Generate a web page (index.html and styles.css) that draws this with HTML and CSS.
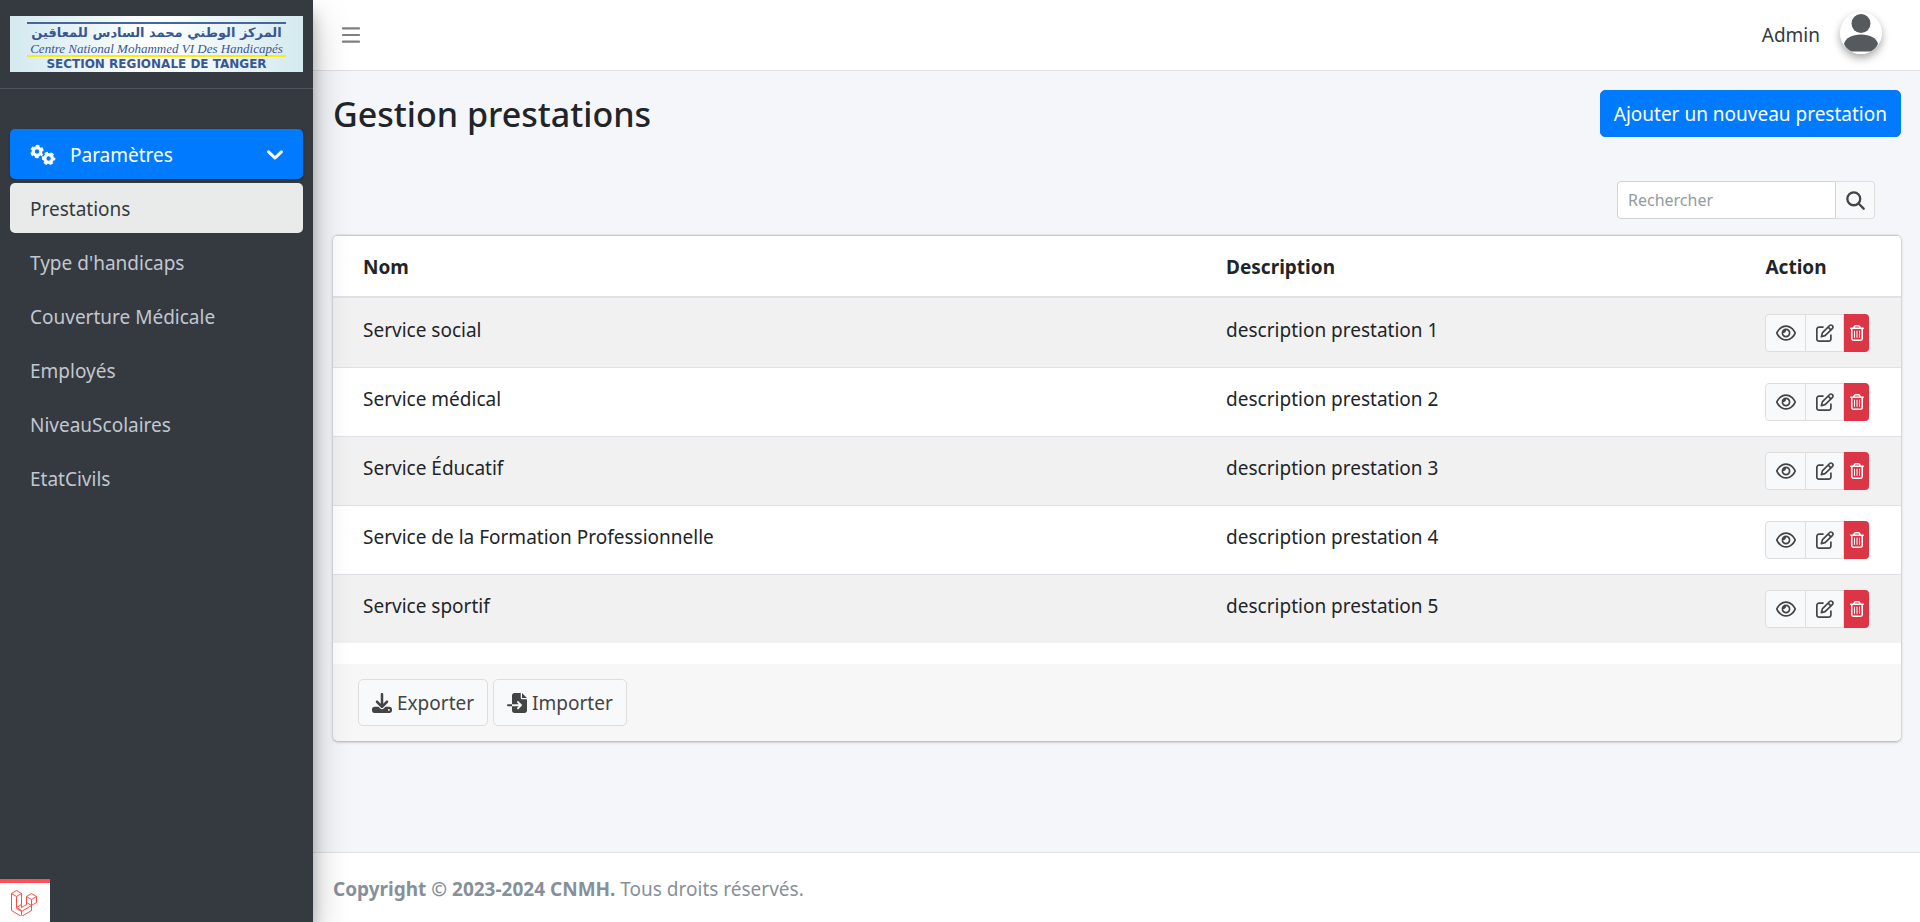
FILE: index.html
```html
<!DOCTYPE html>
<html lang="fr">
<head>
<meta charset="utf-8">
<title>Gestion prestations</title>
<meta name="viewport" content="width=device-width, initial-scale=1">
<link rel="stylesheet" href="styles.css">
</head>
<body>
<svg class="sprite" aria-hidden="true">
  <symbol id="eye" viewBox="0 0 576 512"><path d="M288 80c-65.2 0-118.8 29.6-159.9 67.7C89.6 183.5 63 226 49.4 256c13.6 30 40.2 72.5 78.6 108.3C169.2 402.4 222.8 432 288 432s118.8-29.6 159.9-67.7C486.4 328.5 513 286 526.6 256c-13.6-30-40.2-72.5-78.6-108.3C406.8 109.6 353.2 80 288 80zM95.4 112.6C142.5 68.8 207.2 32 288 32s145.5 36.8 192.6 80.6c46.8 43.5 78.1 95.4 93 131.1c3.3 7.9 3.3 16.7 0 24.6c-14.9 35.7-46.2 87.7-93 131.1C433.5 443.2 368.8 480 288 480s-145.5-36.8-192.6-80.6C48.6 356 17.3 304 2.5 268.3c-3.3-7.9-3.3-16.7 0-24.6C17.3 208 48.6 156 95.4 112.6zM288 336c44.2 0 80-35.8 80-80s-35.8-80-80-80c-.7 0-1.3 0-2 0c1.3 5.1 2 10.5 2 16c0 35.3-28.7 64-64 64c-5.5 0-10.9-.7-16-2c0 .7 0 1.3 0 2c0 44.2 35.8 80 80 80zm0-208a128 128 0 1 1 0 256 128 128 0 1 1 0-256z"/></symbol>
  <symbol id="edit" viewBox="0 0 512 512"><path d="M441 58.9L453.1 71c9.4 9.4 9.4 24.6 0 33.9L424 134.1 377.9 88 407 58.9c9.4-9.4 24.6-9.4 33.9 0zM209.8 256.2L344 121.9 390.1 168 255.8 302.2c-2.9 2.9-6.5 5-10.4 6.1l-58.5 16.7 16.7-58.5c1.1-3.9 3.2-7.5 6.1-10.4zM373.1 25L175.8 222.2c-8.7 8.7-15 19.4-18.3 31.1l-28.6 100c-2.4 8.4-.1 17.4 6.1 23.6s15.2 8.5 23.6 6.1l100-28.6c11.8-3.4 22.5-9.7 31.1-18.3L487 138.9c28.1-28.1 28.1-73.7 0-101.8L474.9 25C446.8-3.1 401.2-3.1 373.1 25zM88 64C39.4 64 0 103.4 0 152V424c0 48.6 39.4 88 88 88H360c48.6 0 88-39.4 88-88V312c0-13.3-10.7-24-24-24s-24 10.7-24 24V424c0 22.1-17.9 40-40 40H88c-22.1 0-40-17.9-40-40V152c0-22.1 17.9-40 40-40H200c13.3 0 24-10.7 24-24s-10.7-24-24-24H88z"/></symbol>
  <symbol id="trash" viewBox="0 0 448 512"><path d="M170.5 51.6L151.5 80h145l-19-28.4c-1.5-2.2-4-3.6-6.7-3.6H177.1c-2.7 0-5.2 1.3-6.7 3.6zm147-26.6L354.2 80H368h48 8c13.3 0 24 10.7 24 24s-10.7 24-24 24h-8V432c0 44.2-35.8 80-80 80H112c-44.2 0-80-35.8-80-80V128H24c-13.3 0-24-10.7-24-24S10.7 80 24 80h8H80 93.8l36.7-55.1C140.9 9.4 158.4 0 177.1 0h93.7c18.7 0 36.2 9.4 46.6 24.9zM80 128V432c0 17.7 14.3 32 32 32H336c17.7 0 32-14.3 32-32V128H80zm80 64V400c0 8.8-7.2 16-16 16s-16-7.2-16-16V192c0-8.8 7.2-16 16-16s16 7.2 16 16zm80 0V400c0 8.8-7.2 16-16 16s-16-7.2-16-16V192c0-8.8 7.2-16 16-16s16 7.2 16 16zm80 0V400c0 8.8-7.2 16-16 16s-16-7.2-16-16V192c0-8.8 7.2-16 16-16s16 7.2 16 16z"/></symbol>
  <symbol id="download" viewBox="0 0 512 512"><path d="M288 32c0-17.7-14.3-32-32-32s-32 14.3-32 32V274.7l-73.4-73.4c-12.5-12.5-32.8-12.5-45.3 0s-12.5 32.8 0 45.3l128 128c12.5 12.5 32.8 12.5 45.3 0l128-128c12.5-12.5 12.5-32.8 0-45.3s-32.8-12.5-45.3 0L288 274.7V32zM64 352c-35.3 0-64 28.7-64 64v32c0 35.3 28.7 64 64 64H448c35.3 0 64-28.7 64-64V416c0-35.3-28.7-64-64-64H346.5l-45.3 45.3c-25 25-65.5 25-90.5 0L165.5 352H64zm368 56a24 24 0 1 1 0 48 24 24 0 1 1 0-48z"/></symbol>
  <symbol id="import" viewBox="0 0 512 512"><path d="M128 64c0-35.3 28.7-64 64-64H352V128c0 17.7 14.3 32 32 32H512V448c0 35.3-28.7 64-64 64H192c-35.3 0-64-28.7-64-64V336H302.1l-39 39c-9.4 9.4-9.4 24.6 0 33.9s24.6 9.4 33.9 0l80-80c9.4-9.4 9.4-24.6 0-33.9l-80-80c-9.4-9.4-24.6-9.4-33.9 0s-9.4 24.6 0 33.9l39 39H128V64zm0 224v48H24c-13.3 0-24-10.7-24-24s10.7-24 24-24H128zM512 128H384V0L512 128z"/></symbol>
  <symbol id="search" viewBox="0 0 20 20"><g fill="none" stroke="currentColor" stroke-width="2.4" stroke-linecap="round"><circle cx="8.2" cy="8.2" r="6.8"/><path d="M13.2 13.2l5.4 5.4"/></g></symbol>
  <symbol id="bars" viewBox="0 0 18 16"><path d="M1 1.4h16M1 8h16M1 14.6h16" fill="none" stroke="currentColor" stroke-width="2.2" stroke-linecap="round"/></symbol>
  <symbol id="chevron" viewBox="0 0 16 10"><path d="M1.6 1.8L8 8l6.4-6.2" fill="none" stroke="currentColor" stroke-width="3" stroke-linecap="round" stroke-linejoin="round"/></symbol>
  <symbol id="gears" viewBox="0 0 26 22"><g fill="none" stroke="currentColor"><circle cx="7" cy="7.5" r="3.8" stroke-width="3.2"/><circle cx="7" cy="7.5" r="5.6" stroke-width="2.2" stroke-dasharray="3.4 2.464" stroke-dashoffset="1.7" transform="rotate(30 7 7.5)"/><circle cx="18.6" cy="14.5" r="3.8" stroke-width="3.2"/><circle cx="18.6" cy="14.5" r="5.6" stroke-width="2.2" stroke-dasharray="3.4 2.464" stroke-dashoffset="1.7"/></g></symbol>
</svg>
<div class="app">
  <aside class="sidebar">
    <a class="brand" href="#">
      <span class="logo">
        <span class="logo-ar" lang="ar" dir="rtl">المركز الوطني محمد السادس للمعاقين</span>
        <span class="logo-fr">Centre National Mohammed VI Des Handicapés</span>
        <span class="logo-section">SECTION REGIONALE DE TANGER</span>
      </span>
    </a>
    <nav class="menu">
      <a class="menu-link menu-parent" href="#"><svg class="icon-gears"><use href="#gears"/></svg><span>Paramètres</span><svg class="icon-chevron"><use href="#chevron"/></svg></a>
      <a class="menu-link menu-current" href="#">Prestations</a>
      <a class="menu-link" href="#">Type d'handicaps</a>
      <a class="menu-link" href="#">Couverture Médicale</a>
      <a class="menu-link" href="#">Employés</a>
      <a class="menu-link" href="#">NiveauScolaires</a>
      <a class="menu-link" href="#">EtatCivils</a>
    </nav>
  </aside>
  <div class="page">
    <header class="topbar">
      <button class="toggle" type="button" aria-label="Menu"><svg class="icon-bars"><use href="#bars"/></svg></button>
      <a class="user" href="#"><span>Admin</span>
        <svg class="avatar" viewBox="0 0 42 42"><circle cx="21" cy="21" r="21" fill="#fff"/><circle cx="21" cy="11.5" r="9.5"/><path d="M4 32C5.500 26 12 22.500 21 22.500S36.500 26 38 32c-1.500 3.500-4 6-7 7.500H11C8 38 5.500 35.500 4 32z"/></svg>
      </a>
    </header>
    <main class="content">
      <div class="heading"><h1>Gestion prestations</h1><a class="btn-primary" href="#">Ajouter un nouveau prestation</a></div>
      <form class="search"><input type="search" placeholder="Rechercher" aria-label="Rechercher"><button type="button" aria-label="Lancer la recherche"><svg class="icon-search"><use href="#search"/></svg></button></form>
      <section class="card">
        <table>
          <thead><tr><th class="col-name">Nom</th><th class="col-desc">Description</th><th>Action</th></tr></thead>
          <tbody>
            <tr><td>Service social</td><td>description prestation 1</td><td><div class="actions"><a class="act" href="#" aria-label="Voir"><svg class="icon-eye"><use href="#eye"/></svg></a><a class="act" href="#" aria-label="Modifier"><svg class="icon-edit"><use href="#edit"/></svg></a><button class="act act-delete" type="button" aria-label="Supprimer"><svg class="icon-trash"><use href="#trash"/></svg></button></div></td></tr>
            <tr><td>Service médical</td><td>description prestation 2</td><td><div class="actions"><a class="act" href="#" aria-label="Voir"><svg class="icon-eye"><use href="#eye"/></svg></a><a class="act" href="#" aria-label="Modifier"><svg class="icon-edit"><use href="#edit"/></svg></a><button class="act act-delete" type="button" aria-label="Supprimer"><svg class="icon-trash"><use href="#trash"/></svg></button></div></td></tr>
            <tr><td>Service Éducatif</td><td>description prestation 3</td><td><div class="actions"><a class="act" href="#" aria-label="Voir"><svg class="icon-eye"><use href="#eye"/></svg></a><a class="act" href="#" aria-label="Modifier"><svg class="icon-edit"><use href="#edit"/></svg></a><button class="act act-delete" type="button" aria-label="Supprimer"><svg class="icon-trash"><use href="#trash"/></svg></button></div></td></tr>
            <tr><td>Service de la Formation Professionnelle</td><td>description prestation 4</td><td><div class="actions"><a class="act" href="#" aria-label="Voir"><svg class="icon-eye"><use href="#eye"/></svg></a><a class="act" href="#" aria-label="Modifier"><svg class="icon-edit"><use href="#edit"/></svg></a><button class="act act-delete" type="button" aria-label="Supprimer"><svg class="icon-trash"><use href="#trash"/></svg></button></div></td></tr>
            <tr><td>Service sportif</td><td>description prestation 5</td><td><div class="actions"><a class="act" href="#" aria-label="Voir"><svg class="icon-eye"><use href="#eye"/></svg></a><a class="act" href="#" aria-label="Modifier"><svg class="icon-edit"><use href="#edit"/></svg></a><button class="act act-delete" type="button" aria-label="Supprimer"><svg class="icon-trash"><use href="#trash"/></svg></button></div></td></tr>
          </tbody>
        </table>
        <div class="card-footer">
          <button class="btn-light" type="button"><svg class="icon-file"><use href="#download"/></svg>Exporter</button>
          <button class="btn-light" type="button"><svg class="icon-file"><use href="#import"/></svg>Importer</button>
        </div>
      </section>
    </main>
    <footer class="footer"><strong>Copyright © 2023-2024 CNMH.</strong> Tous droits réservés.</footer>
  </div>
</div>
<button class="debugbar" type="button" aria-label="Debugbar"><svg class="icon-laravel" viewBox="0 0 26 26"><path d="M.5 3.500l5-3 5 3v14l5-3v-8l5-3 5 3v6l-5 3v5l-10 6-10-6zM.5 3.500l5 3 5-3M5.500 6.500v11l5 3v5M5.500 17.500l5-3M15.500 6.500l5 3 5-3M20.500 9.500v6M15.500 12.500l5 3-10 6-5-3"/></svg></button>
</body>
</html>
```
FILE: styles.css
```css
* { box-sizing: border-box; }
body { margin: 0; background: #f4f6f9; color: #212529; font: 19px/30px "Noto Sans", "Open Sans", sans-serif; }
a { color: inherit; text-decoration: none; }
button, input { font: inherit; margin: 0; }
svg { display: block; flex: none; fill: currentColor; }
.sprite { position: absolute; width: 0; height: 0; }
.app { display: flex; min-height: 100vh; }

.sidebar { flex: none; width: 313px; background: #343a40; color: #c2c7d0; box-shadow: 0 18px 35px rgba(0,0,0,.25), 0 13px 13px rgba(0,0,0,.22); z-index: 1; }
.brand { display: block; padding: 16px 10px; border-bottom: 1px solid #4b545c; }
.logo { display: flex; flex-direction: column; align-items: center; height: 56px; padding: 6px 17px 0; background: linear-gradient(90deg, #d3eaef, #fff 50%, #d3eaef); color: #3a5795; white-space: nowrap; }
.logo-ar { align-self: stretch; border-top: 2px solid #4766a0; font: bold 13px/18px "DejaVu Sans", sans-serif; text-align: center; }
.logo-fr { align-self: stretch; border-bottom: 2px solid #fdea14; font: italic 13px/13px "Liberation Serif", serif; text-align: center; }
.logo-section { font: bold 12px/15px "DejaVu Sans", sans-serif; }
.menu { display: flex; flex-direction: column; gap: 4px; padding: 40px 10px; }
.menu-link { display: flex; align-items: center; height: 50px; padding: 2px 20px 0; border-radius: 5px; }
.menu-parent { gap: 14px; background: #007bff; color: #fff; box-shadow: 0 1px 3px rgba(0,0,0,.24); }
.menu-current { background: #e9ebea; color: #343a40; }
.icon-gears { width: 26px; height: 22px; }
.icon-chevron { width: 16px; height: 10px; margin-left: auto; }

.page { flex: 1; display: flex; flex-direction: column; min-width: 0; }
.topbar { display: flex; align-items: center; justify-content: space-between; height: 71px; padding: 0 38px 0 29px; background: #fff; border-bottom: 1px solid #dee2e6; }
.toggle { padding: 0; border: 0; background: none; color: #808080; }
.icon-bars { width: 18px; height: 16px; }
.user { display: flex; align-items: center; gap: 20px; color: #343a40; }
.avatar { width: 42px; height: 42px; margin-bottom: 4px; color: #545a5e; border-radius: 50%; box-shadow: 0 4px 8px rgba(0,0,0,.35); }
.content { flex: 1; padding: 19px 19px 0 20px; }
.heading { display: flex; align-items: center; justify-content: space-between; }
h1 { margin: 0; font-size: 34px; line-height: 44px; font-weight: 500; }
.btn-primary { padding: 9px 13px 7px; background: #007bff; color: #fff; border: 1px solid #007bff; border-radius: 5px; line-height: 29px; }
.search { display: flex; justify-content: flex-end; margin: 44px 26px 16px 0; }
.search input { width: 219px; height: 38px; padding: 0 10px; border: 1px solid #ced4da; border-radius: 4px 0 0 4px; background: #fff; font-size: 16px; }
.search input::placeholder { color: #939ba2; }
.search button { display: flex; align-items: center; justify-content: center; width: 39px; padding: 0; border: 1px solid #ddd; border-left: 0; border-radius: 0 4px 4px 0; background: #f8f9fa; color: #444; }
.icon-search { width: 19px; height: 19px; }

.card { background: #fff; border-radius: 5px; box-shadow: 0 0 1px rgba(0,0,0,.25), 0 1px 3px rgba(0,0,0,.3); overflow: hidden; }
table { width: 100%; border-collapse: separate; border-spacing: 0; border-top: 1px solid #c8ccd2; }
.col-name { width: 56%; }
.col-desc { width: 34.4%; }
th { height: 62px; padding: 2px 15px 0; border-bottom: 2px solid #dee2e6; text-align: left; font-weight: 700; }
td { padding: 15px; border-top: 1px solid #dee2e6; vertical-align: top; line-height: 32px; }
tbody tr:first-child td { border-top-color: #f2f2f2; }
th:first-child, td:first-child { padding-left: 30px; }
tbody tr:nth-child(odd) { background: #f1f1f1; }
.actions { display: flex; height: 38px; }
.act { display: flex; align-items: center; justify-content: center; width: 38px; background: #f8f9fa; border: 1px solid #ddd; border-left: 0; color: #444; }
.act:first-child { width: 41px; border-left: 1px solid #ddd; border-radius: 4px 0 0 4px; }
.act-delete { width: 25px; padding: 0; border: 0; border-radius: 0 4px 4px 0; background: #dc3545; color: #fff; }
.icon-eye { width: 20px; height: 18px; }
.icon-edit { width: 18px; height: 18px; }
.icon-trash { width: 14px; height: 16px; }
.card-footer { display: flex; gap: 5px; margin-top: 21px; padding: 15px 25px; background: #f7f7f7; }
.btn-light { display: flex; align-items: center; gap: 5px; height: 47px; padding: 0 13px; border: 1px solid #ddd; border-radius: 5px; background: #f8f9fa; color: #444; }
.icon-file { width: 20px; height: 20px; }
.footer { padding: 21px 20px 18px; min-height: 70px; background: #fff; border-top: 1px solid #dee2e6; color: #869099; }
.debugbar { position: fixed; left: 0; bottom: 0; width: 50px; height: 43px; padding: 6px 11px; border: 0; border-top: 4px solid #ff4f59; background: #fff; z-index: 2; }
.icon-laravel { width: 26px; height: 26px; fill: none; stroke: #ff4a40; stroke-linejoin: round; }
```
